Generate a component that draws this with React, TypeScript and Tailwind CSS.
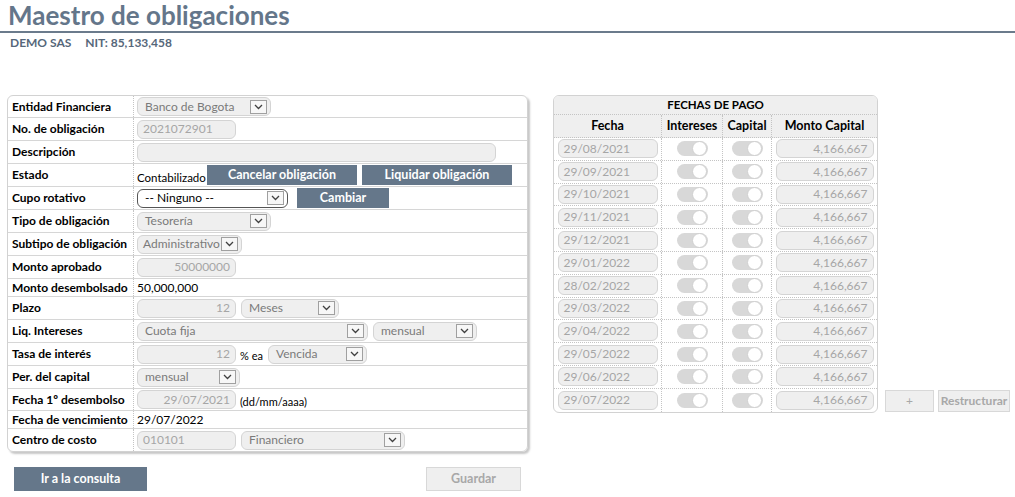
import React from "react";

const font = { fontFamily: "Lato, 'Liberation Sans', sans-serif" };

function Arrow() {
  return (
    <span className="flex h-[14px] w-[17px] shrink-0 items-center justify-center border border-[#a0a0a0] bg-[#f7f7f7]">
      <svg width="9" height="6" viewBox="0 0 9 6">
        <path d="M1 1 L4.5 4.5 L8 1" fill="none" stroke="#404040" strokeWidth="1.3" />
      </svg>
    </span>
  );
}

function Sel({ w, value, white, tight }: { w: string; value: string; white?: boolean; tight?: boolean }) {
  return (
    <div
      className={`flex h-[19px] ${w} items-center justify-between rounded-[6px] border ${tight ? "pl-[5px]" : "pl-[7px]"} pr-[3px] text-[12px] ${
        white ? "border-[#555] bg-white text-black" : "border-[#d4d4d4] bg-[#efefef] text-[#7a7a7a]"
      }`}
    >
      <span className="whitespace-nowrap">{value}</span>
      <Arrow />
    </div>
  );
}

function Inp({ w, value, right }: { w: string; value?: string; right?: boolean }) {
  return (
    <div
      className={`flex h-[19px] ${w} items-center rounded-[6px] border border-[#d4d4d4] bg-[#efefef] px-[5px] text-[12px] text-[#a6a6a6] ${
        right ? "justify-end" : ""
      }`}
    >
      {value}
    </div>
  );
}

function Btn({ w, children }: { w: string; children: React.ReactNode }) {
  return (
    <div className={`flex h-[20px] ${w} items-center justify-center bg-[#65778a] text-[12.5px] font-bold text-white`}>
      {children}
    </div>
  );
}

function Toggle() {
  return (
    <div className="relative h-[15px] w-[31px] rounded-full bg-[#d8d8d8]">
      <div className="absolute right-[1px] top-[0px] h-[15px] w-[15px] rounded-full border border-[#d0d0d0] bg-white" />
    </div>
  );
}

type Row = { label: string; h: string; content: React.ReactNode; last?: boolean };

export default function App() {
  const rows: Row[] = [
    { label: "Entidad Financiera", h: "h-[22px]", content: <Sel w="w-[134px]" value="Banco de Bogota" /> },
    { label: "No. de obligación", h: "h-[23px]", content: <Inp w="w-[99px]" value="2021072901" /> },
    { label: "Descripción", h: "h-[23px]", content: <Inp w="w-[359px]" /> },
    {
      label: "Estado",
      h: "h-[23px]",
      content: (
        <div className="flex h-full items-end pb-[1px]">
          <span className="w-[70px] whitespace-nowrap text-[11.5px] leading-[14px] text-black">Contabilizado</span>
          <Btn w="w-[150px]">Cancelar obligación</Btn>
          <div className="w-[5px]" />
          <Btn w="w-[150px]">Liquidar obligación</Btn>
        </div>
      ),
    },
    {
      label: "Cupo rotativo",
      h: "h-[23px]",
      content: (
        <div className="flex items-center gap-[9px]">
          <Sel w="w-[151px]" value="-- Ninguno --" white />
          <Btn w="w-[92px]">Cambiar</Btn>
        </div>
      ),
    },
    { label: "Tipo de obligación", h: "h-[23px]", content: <Sel w="w-[134px]" value="Tesorería" /> },
    { label: "Subtipo de obligación", h: "h-[23px]", content: <Sel w="w-[105px]" value="Administrativo" tight /> },
    { label: "Monto aprobado", h: "h-[23px]", content: <Inp w="w-[99px]" value="50000000" right /> },
    {
      label: "Monto desembolsado",
      h: "h-[18px]",
      content: <span className="text-[12px] text-black">50,000,000</span>,
    },
    {
      label: "Plazo",
      h: "h-[23px]",
      content: (
        <div className="flex items-center gap-[5px]">
          <Inp w="w-[99px]" value="12" right />
          <Sel w="w-[98px]" value="Meses" />
        </div>
      ),
    },
    {
      label: "Liq. Intereses",
      h: "h-[23px]",
      content: (
        <div className="flex items-center gap-[5px]">
          <Sel w="w-[231px]" value="Cuota fija" />
          <Sel w="w-[104px]" value="mensual" />
        </div>
      ),
    },
    {
      label: "Tasa de interés",
      h: "h-[23px]",
      content: (
        <div className="flex items-center">
          <Inp w="w-[99px]" value="12" right />
          <span className="ml-[4px] mt-[5px] text-[11px] text-black">% ea</span>
          <div className="ml-[5px]">
            <Sel w="w-[99px]" value="Vencida" />
          </div>
        </div>
      ),
    },
    { label: "Per. del capital", h: "h-[23px]", content: <Sel w="w-[103px]" value="mensual" /> },
    {
      label: "Fecha 1º desembolso",
      h: "h-[22px]",
      content: (
        <div className="flex items-center">
          <Inp w="w-[99px]" value="29/07/2021" right />
          <span className="ml-[4px] mt-[5px] text-[11px] text-black">(dd/mm/aaaa)</span>
        </div>
      ),
    },
    {
      label: "Fecha de vencimiento",
      h: "h-[18px]",
      content: <span className="text-[12px] text-black">29/07/2022</span>,
    },
    {
      label: "Centro de costo",
      h: "h-[22px]",
      last: true,
      content: (
        <div className="flex items-center gap-[5px]">
          <Inp w="w-[99px]" value="010101" />
          <Sel w="w-[164px]" value="Financiero" />
        </div>
      ),
    },
  ];

  const fechas = [
    "29/08/2021",
    "29/09/2021",
    "29/10/2021",
    "29/11/2021",
    "29/12/2021",
    "29/01/2022",
    "28/02/2022",
    "29/03/2022",
    "29/04/2022",
    "29/05/2022",
    "29/06/2022",
    "29/07/2022",
  ];

  return (
    <div className="relative h-[497px] w-[1015px] overflow-hidden bg-white" style={font}>
      {/* header */}
      <div className="pl-[8px]">
        <h1 className="text-[26px] font-bold leading-[31px] text-[#64768a]">Maestro de obligaciones</h1>
      </div>
      <div className="h-[2px] w-full bg-[#6b7b8c]" />
      <div className="flex gap-[14px] pl-[10px] pt-[3px] text-[12px] font-bold leading-[14px] text-[#56677a]">
        <span>DEMO SAS</span>
        <span>NIT: 85,133,458</span>
      </div>

      <div className="mt-[45px] flex items-start">
        {/* left panel */}
        <div className="ml-[7px] w-[521px]">
          <div className="overflow-hidden rounded-[6px] border border-[#d2d2d2] shadow-[2px_2px_2px_rgba(0,0,0,0.22)]">
            {rows.map((r, i) => (
              <div key={i} className={`flex ${r.h} ${r.last ? "" : "border-b border-[#d6d6d6]"}`}>
                <div className="flex w-[126px] shrink-0 items-center whitespace-nowrap border-r border-dotted border-[#c4c4c4] pl-[4px] text-[12px] font-bold text-black">
                  {r.label}
                </div>
                <div className="flex flex-1 items-center pl-[3px]">{r.content}</div>
              </div>
            ))}
          </div>
          <div className="mt-[15px] flex items-center justify-between pl-[7px] pr-[7px]">
            <div className="flex h-[24px] w-[133px] items-center justify-center bg-[#65778a] text-[12.5px] font-bold text-white">
              Ir a la consulta
            </div>
            <div className="flex h-[24px] w-[95px] items-center justify-center border border-[#d8d8d8] bg-[#efefef] text-[12.5px] font-bold text-[#a8a8a8]">
              Guardar
            </div>
          </div>
        </div>

        {/* right table */}
        <div className="ml-[25px] flex items-end gap-[7px]">
          <div className="w-[325px] overflow-hidden rounded-[6px] border border-[#d2d2d2]">
            <div className="flex h-[19px] items-center justify-center border-b border-dotted border-[#c4c4c4] bg-[#efefef] text-[11.5px] font-bold text-black">
              FECHAS DE PAGO
            </div>
            <div className="flex h-[23px] border-b border-dotted border-[#c4c4c4] bg-[#efefef] text-[12.5px] font-bold text-black">
              <div className="flex w-[108px] items-center justify-center border-r border-dotted border-[#c4c4c4]">Fecha</div>
              <div className="flex w-[61px] items-center justify-center border-r border-dotted border-[#c4c4c4]">Intereses</div>
              <div className="flex w-[49px] items-center justify-center border-r border-dotted border-[#c4c4c4]">Capital</div>
              <div className="flex flex-1 items-center justify-center">Monto Capital</div>
            </div>
            {fechas.map((f, i) => (
              <div
                key={f}
                className={`flex h-[22.8px] ${i < fechas.length - 1 ? "border-b border-dotted border-[#c4c4c4]" : ""}`}
              >
                <div className="flex w-[108px] items-center justify-center border-r border-dotted border-[#c4c4c4]">
                  <Inp w="w-[100px]" value={f} />
                </div>
                <div className="flex w-[61px] items-center justify-center border-r border-dotted border-[#c4c4c4]">
                  <Toggle />
                </div>
                <div className="flex w-[49px] items-center justify-center border-r border-dotted border-[#c4c4c4]">
                  <Toggle />
                </div>
                <div className="flex flex-1 items-center justify-center">
                  <Inp w="w-[98px]" value="4,166,667" right />
                </div>
              </div>
            ))}
          </div>
          <div className="mb-[1px] flex gap-[4px]">
            <div className="flex h-[22px] w-[49px] items-center justify-center border border-[#d8d8d8] bg-[#efefef] text-[12px] text-[#a8a8a8]">
              +
            </div>
            <div className="flex h-[22px] w-[72px] items-center justify-center border border-[#d8d8d8] bg-[#efefef] text-[12px] font-bold text-[#a8a8a8]">
              Restructurar
            </div>
          </div>
        </div>
      </div>
    </div>
  );
}
